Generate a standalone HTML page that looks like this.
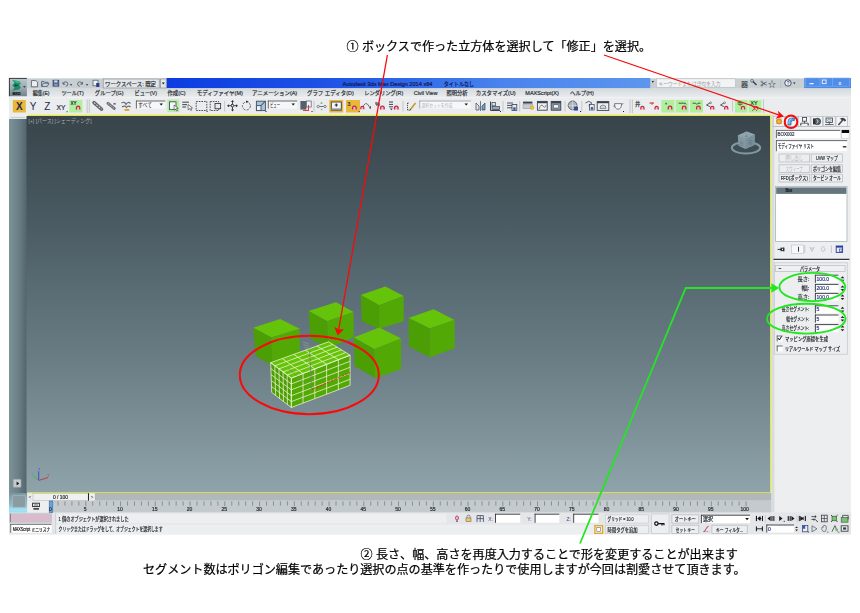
<!DOCTYPE html>
<html lang="ja"><head><meta charset="utf-8"><title>3ds Max tutorial</title>
<style>
html,body{margin:0;padding:0;background:#fff;}
body{width:860px;height:613px;position:relative;overflow:hidden;font-family:"Liberation Sans","Noto Sans CJK JP",sans-serif;color:#000;}
.cap{position:absolute;white-space:nowrap;font-size:12.08px;line-height:14px;color:#000;font-family:"Liberation Sans","Noto Sans CJK JP",sans-serif;z-index:2;-webkit-text-stroke:0.22px #000;}
#ui{position:absolute;left:0;top:0;filter:blur(0.3px);}
#ov{position:absolute;left:0;top:0;z-index:1;}
#ui text{font-family:"Liberation Sans","Noto Sans CJK JP",sans-serif;}
</style></head><body>
<div class="cap" id="cap1" style="left:346.5px;top:39.6px;">① ボックスで作った立方体を選択して「修正」を選択。</div>
<svg id="ui" width="860" height="613" viewBox="0 0 860 613">
<defs>
<linearGradient id="gvp" x1="0" y1="0" x2="0" y2="1"><stop offset="0" stop-color="#38444a"/><stop offset="0.3" stop-color="#4b5c64"/><stop offset="0.65" stop-color="#6a7d85"/><stop offset="1" stop-color="#8fa3aa"/></linearGradient>
<linearGradient id="gls" x1="0" y1="0" x2="1" y2="0"><stop offset="0" stop-color="#7e9399"/><stop offset="0.5" stop-color="#6c8087"/><stop offset="1" stop-color="#53646b"/></linearGradient>
<linearGradient id="gtitle" x1="0" y1="0" x2="1" y2="0"><stop offset="0" stop-color="#0c3ce0"/><stop offset="0.35" stop-color="#1f54e6"/><stop offset="0.7" stop-color="#4a84ec"/><stop offset="1" stop-color="#5c96ee"/></linearGradient>
<linearGradient id="gmenu" x1="0" y1="0" x2="0" y2="1"><stop offset="0" stop-color="#d3d8db"/><stop offset="0.5" stop-color="#dfe3e5"/><stop offset="1" stop-color="#e9ebed"/></linearGradient>
<linearGradient id="gapp" x1="0" y1="0" x2="0" y2="1"><stop offset="0" stop-color="#bcc8cc"/><stop offset="0.55" stop-color="#9aa8ae"/><stop offset="1" stop-color="#74848a"/></linearGradient>
<linearGradient id="gtog" x1="0" y1="0" x2="0" y2="1"><stop offset="0" stop-color="#7c969e"/><stop offset="0.6" stop-color="#8fbcc8"/><stop offset="0.85" stop-color="#a2e4f4"/><stop offset="1" stop-color="#9adcec"/></linearGradient>
</defs>
<rect x="9.00" y="78.00" width="842.00" height="456.30" fill="#e9ebec" />
<rect x="9.00" y="78.00" width="842.00" height="10.50" fill="#c8cfd2" />
<line x1="9.00" y1="78.50" x2="851.00" y2="78.50" stroke="#dde2e4" stroke-width="0.8" />
<rect x="166.50" y="78.00" width="483.70" height="10.30" fill="url(#gtitle)" />
<rect x="804.20" y="78.00" width="46.80" height="10.30" fill="#4b8ae6" />
<rect x="9.00" y="88.30" width="842.00" height="9.00" fill="url(#gmenu)" />
<rect x="9.00" y="97.20" width="842.00" height="17.60" fill="#eaecee" />
<line x1="9.00" y1="97.50" x2="851.00" y2="97.50" stroke="#f6f7f8" stroke-width="0.6" />
<rect x="9.00" y="118.80" width="18.00" height="374.20" fill="url(#gls)" />
<rect x="9.00" y="114.60" width="18.00" height="4.20" fill="#eceeef" />
<line x1="10.50" y1="117.40" x2="25.00" y2="117.40" stroke="#b8bcc0" stroke-width="0.7" />
<rect x="28.00" y="114.80" width="743.20" height="378.20" fill="#e8ec2c" />
<rect x="26.50" y="116.00" width="743.50" height="376.20" fill="url(#gvp)" />
<rect x="771.20" y="114.80" width="79.80" height="397.50" fill="#eceeef" />
<rect x="771.20" y="114.80" width="3.20" height="397.50" fill="#d9dcde" />
<rect x="27.00" y="493.00" width="744.20" height="7.70" fill="#b0b8bc" />
<rect x="27.00" y="500.70" width="744.20" height="12.00" fill="#c4cacd" />
<rect x="9.00" y="512.60" width="842.00" height="21.70" fill="#e4e6e8" />
<rect x="9.00" y="78.00" width="17.90" height="18.20" fill="url(#gapp)" />
<line x1="9.00" y1="78.40" x2="26.90" y2="78.40" stroke="#2a2e30" stroke-width="0.9" />
<line x1="9.40" y1="78.00" x2="9.40" y2="96.20" stroke="#2a2e30" stroke-width="0.9" />
<path d="M12.2,80 l7.2,1.2 1.4,2.2 -1.6,1.8 1.6,2 -1.6,2.4 -7,1.2 2.4,-3 -2.4,-2.4 2.4,-2.6 z" fill="#1c8a68" />
<path d="M12.2,80 l7.2,1.2 1.4,2.2 -4,-0.4 z" fill="#3ab890" />
<path d="M14.6,84.4 l4.4,0.8 -4.2,1.2 z" fill="#0f3a30" />
<text x="12.60" y="95.00" font-size="3.8" fill="#0c1014" text-anchor="start" textLength="8.00" lengthAdjust="spacingAndGlyphs" stroke="#0c1014" stroke-width="0.2" font-weight="bold">MXD</text>
<polygon points="23.00,86.20 25.80,86.20 24.40,87.80" fill="#1a2a5a" />
<path d="M31.4,80.6 h4.4 l1.8,1.6 v4.6 h-6.2 z" fill="#eceef0" stroke="#4a5262" stroke-width="0.8" />
<path d="M41.6,86.4 v-5 h2.4 l0.8,0.9 h3 v1 M41.6,86.4 l1.6,-3.2 h5.8 l-1.6,3.2 z" fill="#c4d4e4" stroke="#4a5566" stroke-width="0.8" />
<rect x="53.00" y="80.20" width="5.80" height="6.00" fill="#5a6c9c" stroke="#34406a" stroke-width="0.7" />
<rect x="54.20" y="80.40" width="3.20" height="2.00" fill="#d4dae8" />
<rect x="54.40" y="84.00" width="3.00" height="2.00" fill="#8a98b8" />
<path d="M63.5,84 a2.2,2.2 0 1 1 2.2,2.2 M63,82 v2.2 h2.2" fill="none" stroke="#5a6270" stroke-width="0.9" />
<text x="69.50" y="85.50" font-size="3.5" fill="#333" text-anchor="start" >▾</text>
<path d="M82,84 a2.2,2.2 0 1 0 -2.2,2.2 M82.5,82 v2.2 h-2.2" fill="none" stroke="#5a6270" stroke-width="0.9" />
<text x="85.50" y="85.50" font-size="3.5" fill="#333" text-anchor="start" >▾</text>
<rect x="93.00" y="80.20" width="5.00" height="5.60" fill="#eef0f2" stroke="#4a5566" stroke-width="0.7" />
<rect x="96.20" y="83.00" width="3.20" height="4.00" fill="#2c3f8a" />
<rect x="103.20" y="79.00" width="56.00" height="9.00" fill="#e3e6e9" stroke="#8a9096" stroke-width="0.7" />
<text x="105.00" y="86.00" font-size="5.8" fill="#2a2e36" text-anchor="start" textLength="51.00" lengthAdjust="spacingAndGlyphs" stroke="#2a2e36" stroke-width="0.2" >ワークスペース: 既定</text>
<rect x="160.40" y="79.00" width="5.80" height="9.00" fill="#e3e6e9" stroke="#8a9096" stroke-width="0.7" />
<polygon points="161.80,82.60 164.80,82.60 163.30,84.60" fill="#222" />
<text x="342.50" y="86.00" font-size="5.6" fill="#0e1a52" text-anchor="start" textLength="90.00" lengthAdjust="spacingAndGlyphs" stroke="#0e1a52" stroke-width="0.2" >Autodesk 3ds Max Design 2014 x64</text>
<text x="443.70" y="86.00" font-size="5.6" fill="#0e1a52" text-anchor="start" textLength="30.50" lengthAdjust="spacingAndGlyphs" stroke="#0e1a52" stroke-width="0.2" >タイトルなし</text>
<polygon points="651.60,81.00 654.00,81.00 652.80,82.80" fill="#222" />
<rect x="656.50" y="78.80" width="79.00" height="8.60" fill="#f2f3f4" stroke="#b5babe" stroke-width="0.6" />
<text x="658.50" y="85.60" font-size="5.2" fill="#9a9fa6" text-anchor="start" textLength="62.00" lengthAdjust="spacingAndGlyphs" >キーワードまたは語句を入力</text>
<text x="741.00" y="86.50" font-size="7" fill="#3a3f46" text-anchor="start" textLength="7.00" lengthAdjust="spacingAndGlyphs" stroke="#3a3f46" stroke-width="0.2" >器</text>
<path d="M752,80.5 l4.5,4.5" fill="none" stroke="#444a52" stroke-width="1.6" />
<circle cx="752.00" cy="80.80" r="1.30" fill="#e8e8e8" stroke="#444a52" stroke-width="0.7" />
<text x="760.50" y="86.40" font-size="6.5" fill="#444a52" text-anchor="start" stroke="#444a52" stroke-width="0.2" >✂</text>
<text x="768.00" y="86.80" font-size="8" fill="#2c3138" text-anchor="start" >☆</text>
<line x1="780.50" y1="79.50" x2="780.50" y2="87.50" stroke="#b5babe" stroke-width="0.7" />
<circle cx="788.00" cy="83.00" r="3.20" fill="#f4f6f8" stroke="#3a4048" stroke-width="0.9" />
<text x="788.00" y="85.00" font-size="5" fill="#2a54c8" text-anchor="middle" font-weight="bold">?</text>
<polygon points="793.00,82.40 795.60,82.40 794.30,84.20" fill="#333" />
<rect x="805.50" y="78.00" width="44.00" height="8.20" fill="#4f8de8" stroke="#7fb0f2" stroke-width="0.6" />
<line x1="820.00" y1="78.00" x2="820.00" y2="86.00" stroke="#7fb0f2" stroke-width="0.6" />
<line x1="832.50" y1="78.00" x2="832.50" y2="86.00" stroke="#7fb0f2" stroke-width="0.6" />
<rect x="809.50" y="83.00" width="4.20" height="1.30" fill="#e8eefc" />
<rect x="822.30" y="80.00" width="3.80" height="3.60" fill="none" stroke="#dfe8fb" stroke-width="1" />
<text x="839.80" y="84.60" font-size="5.6" fill="#e8eefc" text-anchor="middle" font-weight="bold">x</text>
<text x="32.80" y="95.40" font-size="5.7" fill="#2c3036" text-anchor="start" textLength="16.70" lengthAdjust="spacingAndGlyphs" stroke="#2c3036" stroke-width="0.2" >編集(E)</text>
<text x="61.40" y="95.40" font-size="5.7" fill="#2c3036" text-anchor="start" textLength="22.30" lengthAdjust="spacingAndGlyphs" stroke="#2c3036" stroke-width="0.2" >ツール(T)</text>
<text x="94.80" y="95.40" font-size="5.7" fill="#2c3036" text-anchor="start" textLength="28.70" lengthAdjust="spacingAndGlyphs" stroke="#2c3036" stroke-width="0.2" >グループ(G)</text>
<text x="134.60" y="95.40" font-size="5.7" fill="#2c3036" text-anchor="start" textLength="22.40" lengthAdjust="spacingAndGlyphs" stroke="#2c3036" stroke-width="0.2" >ビュー(V)</text>
<text x="167.40" y="95.40" font-size="5.7" fill="#2c3036" text-anchor="start" textLength="18.20" lengthAdjust="spacingAndGlyphs" stroke="#2c3036" stroke-width="0.2" >作成(C)</text>
<text x="196.70" y="95.40" font-size="5.7" fill="#2c3036" text-anchor="start" textLength="46.10" lengthAdjust="spacingAndGlyphs" stroke="#2c3036" stroke-width="0.2" >モディファイヤ(M)</text>
<text x="251.90" y="95.40" font-size="5.7" fill="#2c3036" text-anchor="start" textLength="45.30" lengthAdjust="spacingAndGlyphs" stroke="#2c3036" stroke-width="0.2" >アニメーション(A)</text>
<text x="307.00" y="95.40" font-size="5.7" fill="#2c3036" text-anchor="start" textLength="46.70" lengthAdjust="spacingAndGlyphs" stroke="#2c3036" stroke-width="0.2" >グラフ エディタ(D)</text>
<text x="364.20" y="95.40" font-size="5.7" fill="#2c3036" text-anchor="start" textLength="39.00" lengthAdjust="spacingAndGlyphs" stroke="#2c3036" stroke-width="0.2" >レンダリング(R)</text>
<text x="413.70" y="95.40" font-size="5.7" fill="#2c3036" text-anchor="start" textLength="23.70" lengthAdjust="spacingAndGlyphs" stroke="#2c3036" stroke-width="0.2" >Civil View</text>
<text x="446.50" y="95.40" font-size="5.7" fill="#2c3036" text-anchor="start" textLength="20.90" lengthAdjust="spacingAndGlyphs" stroke="#2c3036" stroke-width="0.2" >照明分析</text>
<text x="475.80" y="95.40" font-size="5.7" fill="#2c3036" text-anchor="start" textLength="39.80" lengthAdjust="spacingAndGlyphs" stroke="#2c3036" stroke-width="0.2" >カスタマイズ(U)</text>
<text x="525.30" y="95.40" font-size="5.7" fill="#2c3036" text-anchor="start" textLength="33.50" lengthAdjust="spacingAndGlyphs" stroke="#2c3036" stroke-width="0.2" >MAXScript(X)</text>
<text x="570.00" y="95.40" font-size="5.7" fill="#2c3036" text-anchor="start" textLength="23.70" lengthAdjust="spacingAndGlyphs" stroke="#2c3036" stroke-width="0.2" >ヘルプ(H)</text>
<rect x="12.80" y="100.00" width="13.00" height="12.50" fill="#e9b83a" />
<text x="19.30" y="110.30" font-size="10" fill="#1d2a4a" text-anchor="middle" font-weight="bold">X</text>
<text x="33.00" y="110.30" font-size="10" fill="#1d2a4a" text-anchor="middle" >Y</text>
<text x="47.40" y="110.30" font-size="10" fill="#1d2a4a" text-anchor="middle" >Z</text>
<text x="61.00" y="109.60" font-size="7.4" fill="#1d2a4a" text-anchor="middle" textLength="9.00" lengthAdjust="spacingAndGlyphs" stroke="#1d2a4a" stroke-width="0.2" >XY</text>
<rect x="66.60" y="111.20" width="1.00" height="1.00" fill="#222" />
<rect x="69.30" y="100.00" width="13.00" height="12.50" fill="#aef09c" />
<text x="70.60" y="105.20" font-size="4.6" fill="#1d2a4a" text-anchor="start" textLength="6.00" lengthAdjust="spacingAndGlyphs" stroke="#1d2a4a" stroke-width="0.2" >XY</text>
<path d="M76.40,109.50 v-1.60 a1.70,1.70 0 0 1 3.40,0 v1.60" fill="#f0b8c4" stroke="#c42840" stroke-width="1.25" />
<line x1="87.20" y1="99.50" x2="87.20" y2="113.00" stroke="#b9bdc1" stroke-width="0.8" />
<line x1="89.30" y1="99.50" x2="89.30" y2="113.00" stroke="#b9bdc1" stroke-width="0.8" />
<path d="M94,102.6 l7.6,6.6" fill="none" stroke="#5e646c" stroke-width="3.4" stroke-linecap="round"/>
<path d="M94,102.6 l7.6,6.6" fill="none" stroke="#d4d8dc" stroke-width="1.1" stroke-dasharray="1.8 1.3"/>
<path d="M108,103.4 l7.4,6" fill="none" stroke="#6a7078" stroke-width="3" stroke-dasharray="3.2 1.6" stroke-linecap="round"/>
<path d="M108,103.4 l7.4,6" fill="none" stroke="#d4d8dc" stroke-width="0.9" stroke-dasharray="1.6 1.4"/>
<text x="113.20" y="104.80" font-size="4.4" fill="#3a3e44" text-anchor="start" stroke="#3a3e44" stroke-width="0.2" >×</text>
<path d="M121.5,103 q3,-2 4.5,1.5 q2,-3.5 4.5,-1 M122,107 q3,-2 4.5,0.5 q2,-2.5 4,-0.5" fill="none" stroke="#6a7078" stroke-width="1.2" />
<rect x="124.50" y="109.00" width="4.80" height="1.80" fill="#e0a020" />
<rect x="136.00" y="100.60" width="29.30" height="8.00" fill="#f6f7f8" />
<line x1="136.00" y1="101.00" x2="165.30" y2="101.00" stroke="#55595c" stroke-width="0.9" />
<line x1="136.40" y1="100.60" x2="136.40" y2="108.60" stroke="#55595c" stroke-width="0.9" />
<text x="138.00" y="106.80" font-size="5.2" fill="#222" text-anchor="start" textLength="14.00" lengthAdjust="spacingAndGlyphs" >すべて</text>
<polygon points="159.50,103.60 163.00,103.60 161.20,105.60" fill="#111" />
<rect x="167.40" y="99.60" width="12.00" height="12.50" fill="#b4f0a4" />
<rect x="169.50" y="101.80" width="6.50" height="7.60" fill="#f4f6f8" stroke="#4a5260" stroke-width="0.9" />
<path d="M174,105 l0.2,5.2 1.3,-1.2 1.2,2 0.9,-0.5 -1.1,-2 1.8,-0.2 z" fill="#fff" stroke="#333" stroke-width="0.6" />
<line x1="182.30" y1="102.20" x2="189.00" y2="102.20" stroke="#4a5260" stroke-width="1.1" />
<line x1="182.30" y1="104.60" x2="187.00" y2="104.60" stroke="#4a5260" stroke-width="1.1" />
<line x1="182.30" y1="107.00" x2="186.00" y2="107.00" stroke="#4a5260" stroke-width="1.1" />
<path d="M188,104.5 l0.2,5.4 1.4,-1.3 1.2,2 0.9,-0.5 -1.1,-2 1.9,-0.2 z" fill="#fff" stroke="#333" stroke-width="0.6" />
<rect x="196.20" y="101.50" width="10.60" height="9.00" fill="none" stroke="#3a4048" stroke-width="0.9" stroke-dasharray="1.6 1"/>
<rect x="206.60" y="111.00" width="1.00" height="1.00" fill="#222" />
<rect x="210.20" y="101.50" width="8.50" height="9.00" fill="none" stroke="#3a4048" stroke-width="0.9" stroke-dasharray="1.6 1"/>
<rect x="215.00" y="103.50" width="5.60" height="5.20" fill="#e6e8ea" stroke="#3a4048" stroke-width="0.9" />
<line x1="224.60" y1="101.00" x2="224.60" y2="111.50" stroke="#b9bdc1" stroke-width="0.8" />
<path d="M232.5,101 v9.5 M228,105.7 h9" fill="none" stroke="#2e343c" stroke-width="0.9" />
<polygon points="232.50,100.00 231.00,102.00 234.00,102.00" fill="#2e343c" />
<polygon points="232.50,111.40 231.00,109.40 234.00,109.40" fill="#2e343c" />
<polygon points="227.00,105.70 229.00,104.20 229.00,107.20" fill="#2e343c" />
<polygon points="238.00,105.70 236.00,104.20 236.00,107.20" fill="#2e343c" />
<rect x="231.40" y="104.60" width="2.20" height="2.20" fill="#eaecee" stroke="#2e343c" stroke-width="0.6" />
<circle cx="246.40" cy="106.00" r="4.00" fill="none" stroke="#5a6068" stroke-width="0.9" stroke-dasharray="2.4 1.2"/>
<polygon points="246.00,100.40 248.80,101.60 246.00,102.80" fill="#333" />
<rect x="256.40" y="101.20" width="9.00" height="9.40" fill="#a8c4e4" stroke="#44505e" stroke-width="0.9" />
<rect x="256.40" y="105.60" width="4.60" height="5.00" fill="#eef0f2" stroke="#44505e" stroke-width="0.9" />
<line x1="261.00" y1="105.60" x2="265.00" y2="101.40" stroke="#222" stroke-width="0.9" />
<rect x="265.50" y="111.00" width="1.00" height="1.00" fill="#222" />
<rect x="267.90" y="100.60" width="29.30" height="8.00" fill="#f6f7f8" />
<line x1="267.90" y1="101.00" x2="297.20" y2="101.00" stroke="#55595c" stroke-width="0.9" />
<line x1="268.30" y1="100.60" x2="268.30" y2="108.60" stroke="#55595c" stroke-width="0.9" />
<text x="270.00" y="106.80" font-size="5.2" fill="#222" text-anchor="start" textLength="10.00" lengthAdjust="spacingAndGlyphs" >ビュー</text>
<polygon points="291.50,103.60 295.00,103.60 293.20,105.60" fill="#111" />
<rect x="300.40" y="101.00" width="6.00" height="8.60" fill="#55606c" />
<rect x="306.40" y="101.00" width="4.80" height="6.00" fill="#f0f2f4" stroke="#55606c" stroke-width="0.7" />
<path d="M303,110.5 h6 M308.5,105 v5" fill="none" stroke="#d22" stroke-width="0.9" />
<rect x="311.50" y="111.00" width="1.00" height="1.00" fill="#222" />
<line x1="314.00" y1="101.00" x2="314.00" y2="111.50" stroke="#b9bdc1" stroke-width="0.8" />
<path d="M317.5,106.5 h8" fill="none" stroke="#5a6270" stroke-width="0.9" />
<circle cx="318.20" cy="106.50" r="1.20" fill="#eaecee" stroke="#5a6270" stroke-width="0.7" />
<circle cx="325.00" cy="106.50" r="1.20" fill="#eaecee" stroke="#5a6270" stroke-width="0.7" />
<polygon points="321.50,102.00 320.20,103.60 322.80,103.60" fill="#4a9a40" />
<rect x="320.90" y="108.80" width="1.30" height="1.30" fill="#8a9098" />
<rect x="329.30" y="100.00" width="13.90" height="12.50" fill="#e9b83a" />
<rect x="331.30" y="102.00" width="10.00" height="8.20" fill="#f4f5f6" stroke="#3a4048" stroke-width="0.9" />
<rect x="331.30" y="108.40" width="10.00" height="1.80" fill="#8a9098" />
<path d="M336.3,103.5 v3.2 M334.8,105 h3" fill="none" stroke="#222" stroke-width="1" />
<rect x="346.00" y="100.00" width="14.00" height="12.50" fill="#e9b83a" />
<text x="347.40" y="105.60" font-size="5" fill="#1d2a4a" text-anchor="start" stroke="#1d2a4a" stroke-width="0.2" >3</text>
<path d="M352.60,109.55 v-1.68 a1.78,1.78 0 0 1 3.57,0 v1.68" fill="#f0b8c4" stroke="#c42840" stroke-width="1.3125" />
<rect x="358.60" y="111.00" width="1.00" height="1.00" fill="#222" />
<path d="M362,109 q3.5,-10 7.5,-2" fill="none" stroke="#4a5260" stroke-width="0.8" />
<polygon points="369.00,108.00 371.00,105.80 370.60,109.00" fill="#333" />
<path d="M360.80,109.30 v-1.44 a1.53,1.53 0 0 1 3.06,0 v1.44" fill="#f0b8c4" stroke="#c42840" stroke-width="1.125" />
<text x="375.30" y="105.60" font-size="5" fill="#1d2a4a" text-anchor="start" stroke="#1d2a4a" stroke-width="0.2" >%</text>
<path d="M380.60,109.55 v-1.68 a1.78,1.78 0 0 1 3.57,0 v1.68" fill="#f0b8c4" stroke="#c42840" stroke-width="1.3125" />
<path d="M389,102 h4 M389,104.4 h4 M389,106.8 h4" fill="none" stroke="#2e343c" stroke-width="0.9" />
<polygon points="390.00,108.40 392.60,108.40 391.30,110.20" fill="#2e343c" />
<path d="M394.50,109.55 v-1.68 a1.78,1.78 0 0 1 3.57,0 v1.68" fill="#f0b8c4" stroke="#c42840" stroke-width="1.3125" />
<line x1="403.00" y1="101.00" x2="403.00" y2="111.50" stroke="#b9bdc1" stroke-width="0.8" />
<path d="M407.5,103 v7 M407.5,103 h1.5 M407.5,110 h1.5" fill="none" stroke="#2e343c" stroke-width="0.8" stroke-dasharray="1.2 0.8"/>
<path d="M410,110 l5.5,-7" fill="none" stroke="#c89a30" stroke-width="1.6" />
<path d="M409.6,110.6 l1,-1.4" fill="none" stroke="#333" stroke-width="1" />
<rect x="419.30" y="100.60" width="51.60" height="8.00" fill="#f6f7f8" />
<line x1="419.30" y1="101.00" x2="470.90" y2="101.00" stroke="#9aa0a6" stroke-width="0.9" />
<line x1="419.70" y1="100.60" x2="419.70" y2="108.60" stroke="#9aa0a6" stroke-width="0.9" />
<text x="421.50" y="106.60" font-size="4.8" fill="#b0b5ba" text-anchor="start" textLength="31.00" lengthAdjust="spacingAndGlyphs" >選択セットを作成</text>
<polygon points="464.50,103.60 468.00,103.60 466.20,105.60" fill="#111" />
<path d="M476,110 v-7 l3,3 v4 z" fill="#dfe6f0" stroke="#3a4250" stroke-width="0.7" />
<path d="M485,110 v-7 l-3,3 v4 z" fill="#6aa0e0" stroke="#3a4250" stroke-width="0.7" />
<line x1="480.50" y1="101.20" x2="480.50" y2="111.00" stroke="#3a4250" stroke-width="0.7" />
<path d="M490.5,101.5 v9 h9.5" fill="none" stroke="#3a4250" stroke-width="1" />
<rect x="492.00" y="102.60" width="3.40" height="3.20" fill="#dfe4ea" stroke="#3a4250" stroke-width="0.7" />
<rect x="492.00" y="106.60" width="7.60" height="3.00" fill="#9aa6b4" stroke="#3a4250" stroke-width="0.7" />
<rect x="500.00" y="111.00" width="1.00" height="1.00" fill="#222" />
<line x1="503.00" y1="101.00" x2="503.00" y2="111.50" stroke="#b9bdc1" stroke-width="0.8" />
<path d="M507,103 h6 M507,105.4 h6 M507,107.8 h5" fill="none" stroke="#3a4250" stroke-width="0.9" />
<rect x="512.00" y="104.50" width="4.80" height="6.00" fill="#e8eaee" stroke="#3a4250" stroke-width="0.8" />
<rect x="513.20" y="107.40" width="2.40" height="2.40" fill="#2a4ab8" />
<line x1="519.70" y1="101.00" x2="519.70" y2="111.50" stroke="#b9bdc1" stroke-width="0.8" />
<rect x="523.00" y="101.60" width="9.40" height="2.00" fill="#3a4250" />
<rect x="523.00" y="104.00" width="9.40" height="4.60" fill="#c6ccd4" stroke="#8a909a" stroke-width="0.5" />
<circle cx="532.00" cy="107.60" r="1.90" fill="#f0c040" stroke="#c89820" stroke-width="0.5" />
<rect x="537.40" y="101.40" width="9.80" height="8.80" fill="#eef0f2" stroke="#3a4250" stroke-width="0.9" />
<rect x="537.40" y="101.40" width="9.80" height="1.80" fill="#3a4250" />
<path d="M539,109 q2,-6 4,-3 t3,-1" fill="none" stroke="#555" stroke-width="0.7" />
<rect x="551.20" y="101.40" width="9.60" height="8.80" fill="#8a949e" stroke="#3a4250" stroke-width="0.9" />
<rect x="551.20" y="101.40" width="9.60" height="1.80" fill="#3a4250" />
<rect x="553.40" y="104.80" width="5.20" height="3.20" fill="#f4f5f6" stroke="#3a4250" stroke-width="0.5" />
<line x1="565.00" y1="101.00" x2="565.00" y2="111.50" stroke="#b9bdc1" stroke-width="0.8" />
<circle cx="572.60" cy="105.40" r="4.40" fill="#aab2ba" stroke="#4a5260" stroke-width="0.8" />
<path d="M568.4,105.4 h8.4 M572.6,101 v8.8" fill="none" stroke="#e8eaec" stroke-width="0.6" />
<rect x="574.40" y="107.00" width="3.40" height="3.20" fill="#2a4ab8" stroke="#1a2a70" stroke-width="0.4" />
<rect x="580.00" y="111.00" width="1.00" height="1.00" fill="#222" />
<line x1="581.80" y1="101.00" x2="581.80" y2="111.50" stroke="#b9bdc1" stroke-width="0.8" />
<path d="M585.5,103 l3,-1.6 3,1.2 -0.4,1.8 h-1.8 v2.2" fill="none" stroke="#4a5260" stroke-width="0.9" />
<rect x="589.60" y="104.60" width="4.60" height="5.40" fill="#e8eaee" stroke="#3a4250" stroke-width="0.7" />
<rect x="590.80" y="107.20" width="2.20" height="2.20" fill="#2a4ab8" />
<rect x="597.20" y="101.60" width="11.60" height="8.80" fill="#eef0f2" stroke="#3a4250" stroke-width="0.9" />
<rect x="597.20" y="101.60" width="11.60" height="1.60" fill="#3a4250" />
<path d="M600,108.4 q0,-3.4 3,-3.4 t3,3.4 z" fill="#d8dce0" stroke="#4a5260" stroke-width="0.6" />
<path d="M614.6,103.6 h7 q0,5.6 -3.5,5.6 t-3.5,-5.6 z M621.4,104.6 l2,-1.2 M614.8,104.8 q-1.8,0.6 -0.4,2.4" fill="#f2f3f4" stroke="#5a6470" stroke-width="0.8" />
<rect x="623.00" y="111.00" width="1.00" height="1.00" fill="#222" />
<line x1="630.00" y1="99.50" x2="630.00" y2="113.00" stroke="#b9bdc1" stroke-width="0.8" />
<line x1="632.40" y1="99.50" x2="632.40" y2="113.00" stroke="#b9bdc1" stroke-width="0.8" />
<text x="635.00" y="106.00" font-size="5.4" fill="#2e343c" text-anchor="start" stroke="#2e343c" stroke-width="0.2" >井</text>
<path d="M640.80,109.45 v-1.52 a1.61,1.61 0 0 1 3.23,0 v1.52" fill="#f0b8c4" stroke="#c42840" stroke-width="1.1875" />
<path d="M649.5,103 h4.5" fill="none" stroke="#c22" stroke-width="1" />
<polygon points="651.00,103.40 653.00,103.40 652.00,105.00" fill="#c22" />
<path d="M655.00,109.45 v-1.52 a1.61,1.61 0 0 1 3.23,0 v1.52" fill="#f0b8c4" stroke="#c42840" stroke-width="1.1875" />
<rect x="661.40" y="100.00" width="13.00" height="12.50" fill="#aef09c" />
<rect x="675.60" y="100.00" width="13.00" height="12.50" fill="#aef09c" />
<rect x="690.00" y="100.00" width="13.00" height="12.50" fill="#aef09c" />
<rect x="665.50" y="102.80" width="1.20" height="1.60" fill="#2e343c" />
<path d="M668.20,109.55 v-1.68 a1.78,1.78 0 0 1 3.57,0 v1.68" fill="#f0b8c4" stroke="#c42840" stroke-width="1.3125" />
<path d="M678.5,103.2 h6.5 l1.4,1.2" fill="none" stroke="#2e343c" stroke-width="0.8" />
<path d="M682.40,109.55 v-1.68 a1.78,1.78 0 0 1 3.57,0 v1.68" fill="#f0b8c4" stroke="#c42840" stroke-width="1.3125" />
<path d="M692.6,103.2 h3 l1.2,1.2 1.2,-1.2 h2.6" fill="none" stroke="#2e343c" stroke-width="0.8" />
<path d="M696.60,109.55 v-1.68 a1.78,1.78 0 0 1 3.57,0 v1.68" fill="#f0b8c4" stroke="#c42840" stroke-width="1.3125" />
<path d="M706.5,105 l4,-2.4 M706.5,105 l3.4,1.6" fill="none" stroke="#2e343c" stroke-width="0.8" />
<circle cx="710.60" cy="102.80" r="0.90" fill="#fff" stroke="#333" stroke-width="0.5" />
<path d="M710.60,109.45 v-1.52 a1.61,1.61 0 0 1 3.23,0 v1.52" fill="#f0b8c4" stroke="#c42840" stroke-width="1.1875" />
<path d="M720.5,105 l4,-2.4 M720.5,105 l3.4,1.6" fill="none" stroke="#2e343c" stroke-width="0.8" />
<circle cx="724.60" cy="102.80" r="0.90" fill="#fff" stroke="#333" stroke-width="0.5" />
<path d="M724.60,109.45 v-1.52 a1.61,1.61 0 0 1 3.23,0 v1.52" fill="#f0b8c4" stroke="#c42840" stroke-width="1.1875" />
<line x1="732.60" y1="101.00" x2="732.60" y2="111.50" stroke="#b9bdc1" stroke-width="0.8" />
<rect x="735.00" y="100.00" width="12.50" height="12.50" fill="#aef09c" />
<rect x="748.80" y="100.00" width="12.50" height="12.50" fill="#aef09c" />
<text x="737.40" y="105.40" font-size="5" fill="#3a5a3a" text-anchor="start" stroke="#3a5a3a" stroke-width="0.2" >中</text>
<path d="M741.40,109.45 v-1.52 a1.61,1.61 0 0 1 3.23,0 v1.52" fill="#f0b8c4" stroke="#c42840" stroke-width="1.1875" />
<text x="750.60" y="105.40" font-size="4.6" fill="#2e4a3a" text-anchor="start" textLength="7.00" lengthAdjust="spacingAndGlyphs" stroke="#2e4a3a" stroke-width="0.2" >XY</text>
<path d="M752,106 l5,5 M757,106 l-5,5" fill="none" stroke="#c8283c" stroke-width="0.8" />
<path d="M754.60,109.50 v-1.44 a1.53,1.53 0 0 1 3.06,0 v1.44" fill="#f0b8c4" stroke="#c42840" stroke-width="1.125" />
<line x1="763.50" y1="99.50" x2="763.50" y2="113.00" stroke="#b9bdc1" stroke-width="0.8" />
<text x="28.60" y="122.60" font-size="5.2" fill="#a9b0b3" text-anchor="start" textLength="63.00" lengthAdjust="spacingAndGlyphs" >[+] [パース] [シェーディング]</text>
<ellipse cx="746.00" cy="147.80" rx="14.20" ry="5.70" fill="#3f4e55" stroke="#8298a0" stroke-width="2" />
<polygon points="737.80,135.40 746.60,131.60 754.80,134.60 754.40,145.00 745.40,149.00 738.40,145.80" fill="#8399a1" />
<polygon points="737.80,135.40 746.60,131.60 754.80,134.60 746.00,138.60" fill="#8fa5ad" />
<polygon points="746.00,138.60 754.80,134.60 754.40,145.00 745.40,149.00" fill="#7b9199" />
<text x="746.40" y="137.00" font-size="3.6" fill="#4a5a9a" text-anchor="middle" >上</text>
<text x="741.80" y="145.00" font-size="4.4" fill="#5a6f8a" text-anchor="middle" >左</text>
<text x="750.40" y="144.20" font-size="4.4" fill="#566b86" text-anchor="middle" >前</text>
<line x1="38.70" y1="480.40" x2="38.70" y2="471.20" stroke="#2a4ae0" stroke-width="0.9" />
<line x1="38.70" y1="480.40" x2="48.00" y2="477.60" stroke="#c8323a" stroke-width="0.9" />
<line x1="38.70" y1="480.40" x2="32.80" y2="475.40" stroke="#3db845" stroke-width="0.9" />
<text x="39.20" y="469.80" font-size="3.6" fill="#2a4ae0" text-anchor="middle" >z</text>
<text x="48.40" y="476.40" font-size="3" fill="#c8323a" text-anchor="middle" >y</text>
<text x="32.40" y="474.60" font-size="3" fill="#3db845" text-anchor="middle" >x</text>
<polygon points="360.60,295.10 385.40,286.60 403.70,296.00 379.20,305.30" fill="#65c40a" />
<polygon points="360.60,295.10 379.20,305.30 379.20,328.80 361.90,321.30" fill="#4b9e04" />
<polygon points="379.20,305.30 403.70,296.00 403.70,321.30 379.20,328.80" fill="#52a906" />
<polygon points="308.50,311.10 336.00,302.30 353.60,312.10 327.20,321.30" fill="#65c40a" />
<polygon points="308.50,311.10 327.20,321.30 328.10,348.30 310.50,338.50" fill="#4b9e04" />
<polygon points="327.20,321.30 353.60,312.10 353.60,337.60 328.10,348.30" fill="#52a906" />
<polygon points="408.50,318.00 433.60,309.20 454.60,319.90 429.70,328.40" fill="#65c40a" />
<polygon points="408.50,318.00 429.70,328.40 429.70,357.20 408.90,346.40" fill="#4b9e04" />
<polygon points="429.70,328.40 454.60,319.90 454.60,348.30 429.70,357.20" fill="#52a906" />
<polygon points="253.30,327.80 280.10,319.00 299.70,328.80 271.30,337.60" fill="#65c40a" />
<polygon points="253.30,327.80 271.30,337.60 272.50,365.50 255.70,356.20" fill="#4b9e04" />
<polygon points="271.30,337.60 299.70,328.80 299.70,356.50 272.50,365.50" fill="#52a906" />
<polygon points="353.70,337.60 379.20,327.40 401.10,338.50 374.30,349.30" fill="#65c40a" />
<polygon points="353.70,337.60 374.30,349.30 375.30,378.30 354.70,366.00" fill="#4b9e04" />
<polygon points="374.30,349.30 401.10,338.50 401.10,368.90 375.30,378.30" fill="#52a906" />
<polygon points="270.70,362.70 328.50,341.80 350.10,355.20 291.30,378.10" fill="#65c40a" />
<polygon points="270.70,362.70 291.30,378.10 291.30,407.50 271.70,392.40" fill="#4b9e04" />
<polygon points="291.30,378.10 350.10,355.20 350.10,385.30 291.30,407.50" fill="#52a906" />
<line x1="270.70" y1="362.70" x2="291.30" y2="378.10" stroke="#f0f4d2" stroke-width="0.75" />
<line x1="270.70" y1="362.70" x2="328.50" y2="341.80" stroke="#f0f4d2" stroke-width="0.75" />
<line x1="270.70" y1="362.70" x2="271.70" y2="392.40" stroke="#f0f4d2" stroke-width="0.75" />
<line x1="270.70" y1="362.70" x2="291.30" y2="378.10" stroke="#f0f4d2" stroke-width="0.75" />
<line x1="291.30" y1="378.10" x2="291.30" y2="407.50" stroke="#f0f4d2" stroke-width="0.75" />
<line x1="291.30" y1="378.10" x2="350.10" y2="355.20" stroke="#f0f4d2" stroke-width="0.75" />
<line x1="282.26" y1="358.52" x2="303.06" y2="373.52" stroke="#f0f4d2" stroke-width="0.75" />
<line x1="274.82" y1="365.78" x2="332.82" y2="344.48" stroke="#f0f4d2" stroke-width="0.75" />
<line x1="274.82" y1="365.78" x2="275.62" y2="395.42" stroke="#f0f4d2" stroke-width="0.75" />
<line x1="270.90" y1="368.64" x2="291.30" y2="383.98" stroke="#f0f4d2" stroke-width="0.75" />
<line x1="303.06" y1="373.52" x2="303.06" y2="403.06" stroke="#f0f4d2" stroke-width="0.75" />
<line x1="291.30" y1="383.98" x2="350.10" y2="361.22" stroke="#f0f4d2" stroke-width="0.75" />
<line x1="293.82" y1="354.34" x2="314.82" y2="368.94" stroke="#f0f4d2" stroke-width="0.75" />
<line x1="278.94" y1="368.86" x2="337.14" y2="347.16" stroke="#f0f4d2" stroke-width="0.75" />
<line x1="278.94" y1="368.86" x2="279.54" y2="398.44" stroke="#f0f4d2" stroke-width="0.75" />
<line x1="271.10" y1="374.58" x2="291.30" y2="389.86" stroke="#f0f4d2" stroke-width="0.75" />
<line x1="314.82" y1="368.94" x2="314.82" y2="398.62" stroke="#f0f4d2" stroke-width="0.75" />
<line x1="291.30" y1="389.86" x2="350.10" y2="367.24" stroke="#f0f4d2" stroke-width="0.75" />
<line x1="305.38" y1="350.16" x2="326.58" y2="364.36" stroke="#f0f4d2" stroke-width="0.75" />
<line x1="283.06" y1="371.94" x2="341.46" y2="349.84" stroke="#f0f4d2" stroke-width="0.75" />
<line x1="283.06" y1="371.94" x2="283.46" y2="401.46" stroke="#f0f4d2" stroke-width="0.75" />
<line x1="271.30" y1="380.52" x2="291.30" y2="395.74" stroke="#f0f4d2" stroke-width="0.75" />
<line x1="326.58" y1="364.36" x2="326.58" y2="394.18" stroke="#f0f4d2" stroke-width="0.75" />
<line x1="291.30" y1="395.74" x2="350.10" y2="373.26" stroke="#f0f4d2" stroke-width="0.75" />
<line x1="316.94" y1="345.98" x2="338.34" y2="359.78" stroke="#f0f4d2" stroke-width="0.75" />
<line x1="287.18" y1="375.02" x2="345.78" y2="352.52" stroke="#f0f4d2" stroke-width="0.75" />
<line x1="287.18" y1="375.02" x2="287.38" y2="404.48" stroke="#f0f4d2" stroke-width="0.75" />
<line x1="271.50" y1="386.46" x2="291.30" y2="401.62" stroke="#f0f4d2" stroke-width="0.75" />
<line x1="338.34" y1="359.78" x2="338.34" y2="389.74" stroke="#f0f4d2" stroke-width="0.75" />
<line x1="291.30" y1="401.62" x2="350.10" y2="379.28" stroke="#f0f4d2" stroke-width="0.75" />
<line x1="328.50" y1="341.80" x2="350.10" y2="355.20" stroke="#f0f4d2" stroke-width="0.75" />
<line x1="291.30" y1="378.10" x2="350.10" y2="355.20" stroke="#f0f4d2" stroke-width="0.75" />
<line x1="291.30" y1="378.10" x2="291.30" y2="407.50" stroke="#f0f4d2" stroke-width="0.75" />
<line x1="271.70" y1="392.40" x2="291.30" y2="407.50" stroke="#f0f4d2" stroke-width="0.75" />
<line x1="350.10" y1="355.20" x2="350.10" y2="385.30" stroke="#f0f4d2" stroke-width="0.75" />
<line x1="291.30" y1="407.50" x2="350.10" y2="385.30" stroke="#f0f4d2" stroke-width="0.75" />
<path d="M303,342 l6,2 M303.5,344.5 l6,2 M304,347 l5.6,1.8" fill="none" stroke="#9aa8ae" stroke-width="0.7" opacity="0.7"/>
<line x1="309.60" y1="350.70" x2="311.60" y2="388.50" stroke="#6f7e74" stroke-width="0.7" />
<line x1="312.20" y1="389.20" x2="349.40" y2="372.90" stroke="#d8201c" stroke-width="0.8" stroke-dasharray="3 1"/>
<line x1="311.60" y1="388.50" x2="288.00" y2="368.30" stroke="#6f8a6a" stroke-width="0.5" />
<text x="349.60" y="374.40" font-size="3.4" fill="#d8201c" text-anchor="middle" >x</text>
<rect x="773.20" y="116.30" width="11.40" height="10.00" fill="#f2f3f4" stroke="#b4b8bc" stroke-width="0.7" />
<rect x="785.40" y="116.30" width="12.00" height="10.00" fill="#f2f3f4" stroke="#b4b8bc" stroke-width="0.7" />
<rect x="798.20" y="116.30" width="12.00" height="10.00" fill="#f2f3f4" stroke="#b4b8bc" stroke-width="0.7" />
<rect x="811.00" y="116.30" width="11.40" height="10.00" fill="#f2f3f4" stroke="#b4b8bc" stroke-width="0.7" />
<rect x="823.20" y="116.30" width="12.00" height="10.00" fill="#f2f3f4" stroke="#b4b8bc" stroke-width="0.7" />
<rect x="836.00" y="116.30" width="11.40" height="10.00" fill="#f2f3f4" stroke="#b4b8bc" stroke-width="0.7" />
<line x1="772.80" y1="126.50" x2="850.00" y2="126.50" stroke="#b4b8bc" stroke-width="0.7" />
<circle cx="779.00" cy="121.40" r="2.60" fill="#f0b030" stroke="#c8781c" stroke-width="0.8" />
<circle cx="779.00" cy="121.40" r="1.00" fill="#fff3c0" />
<path d="M776,118.4 l6,6 M782,118.4 l-6,6" fill="none" stroke="#d88a2a" stroke-width="0.7" />
<path d="M788,125 v-3.4 q0,-3.6 4,-3.6 h2.4 v2.6 h-1.6 q-1.8,0 -1.8,2 v2.4 z" fill="#5aa0e0" stroke="#2a5aa0" stroke-width="0.7" />
<path d="M789,124 v-2.6 q0,-2.4 2.6,-2.6" fill="none" stroke="#d0e6fa" stroke-width="0.8" />
<rect x="802.40" y="117.60" width="4.20" height="3.60" fill="#f4f5f6" stroke="#3a4048" stroke-width="0.8" />
<path d="M804.5,121.2 v2 M800.8,123.2 h7.4 M800.8,123.2 v1.2 M808.2,123.2 v1.2" fill="none" stroke="#3a4048" stroke-width="0.8" />
<circle cx="800.80" cy="124.80" r="0.80" fill="#3a4048" />
<circle cx="808.20" cy="124.80" r="0.80" fill="#3a4048" />
<circle cx="817.40" cy="121.40" r="3.20" fill="#5a6470" stroke="#2e343c" stroke-width="0.8" />
<rect x="813.00" y="118.40" width="2.40" height="6.00" fill="#2e343c" />
<path d="M816.6,119.4 a2.2,2.2 0 0 1 0,4" fill="none" stroke="#e8eaec" stroke-width="0.8" />
<rect x="826.00" y="118.00" width="6.60" height="4.60" fill="#e8eaee" stroke="#3a4048" stroke-width="0.8" />
<path d="M825,124.6 h8.6 M829.3,122.6 v2" fill="none" stroke="#3a4048" stroke-width="0.8" />
<ellipse cx="829.30" cy="120.30" rx="1.80" ry="1.20" fill="none" stroke="#6a7480" stroke-width="0.6" />
<path d="M838.4,125 l4.4,-5" fill="none" stroke="#5a4a40" stroke-width="1.6" />
<path d="M840.4,118.6 q3,-1.6 5.6,1.6 l-1.2,1 q-1.4,-1.6 -3,-1.2 z" fill="#3a4048" stroke="#2a2e34" stroke-width="0.5" />
<rect x="776.00" y="130.00" width="64.20" height="8.20" fill="#fff" />
<line x1="776.00" y1="130.40" x2="840.20" y2="130.40" stroke="#55595c" stroke-width="0.9" />
<line x1="776.40" y1="130.00" x2="776.40" y2="138.20" stroke="#55595c" stroke-width="0.9" />
<text x="777.60" y="136.40" font-size="5" fill="#34384a" text-anchor="start" textLength="17.00" lengthAdjust="spacingAndGlyphs" stroke="#34384a" stroke-width="0.2" >BOX002</text>
<rect x="841.70" y="130.00" width="7.40" height="8.20" fill="#fff" stroke="#c0c4c8" stroke-width="0.5" />
<rect x="841.70" y="130.00" width="7.40" height="3.00" fill="#0a0a0a" />
<rect x="776.00" y="140.20" width="71.20" height="11.00" fill="#fff" />
<line x1="776.00" y1="140.60" x2="847.20" y2="140.60" stroke="#55595c" stroke-width="0.9" />
<line x1="776.40" y1="140.20" x2="776.40" y2="151.20" stroke="#55595c" stroke-width="0.9" />
<text x="777.80" y="148.20" font-size="5.4" fill="#2a2e34" text-anchor="start" textLength="36.00" lengthAdjust="spacingAndGlyphs" stroke="#2a2e34" stroke-width="0.2" >モディファイヤ リスト</text>
<rect x="842.80" y="146.20" width="3.60" height="1.20" fill="#111" />
<rect x="779.00" y="154.00" width="30.70" height="8.00" fill="#eceeef" stroke="#b4b8bb" stroke-width="0.7" />
<rect x="811.20" y="154.00" width="31.40" height="8.00" fill="#eceeef" stroke="#b4b8bb" stroke-width="0.7" />
<rect x="779.00" y="164.80" width="30.70" height="7.60" fill="#eceeef" stroke="#b4b8bb" stroke-width="0.7" />
<rect x="811.20" y="164.80" width="31.40" height="7.60" fill="#eceeef" stroke="#b4b8bb" stroke-width="0.7" />
<rect x="779.00" y="174.20" width="30.70" height="7.80" fill="#eceeef" stroke="#b4b8bb" stroke-width="0.7" />
<rect x="811.20" y="174.20" width="31.40" height="7.80" fill="#eceeef" stroke="#b4b8bb" stroke-width="0.7" />
<text x="794.30" y="160.40" font-size="5.4" fill="#b0b4b8" text-anchor="middle" textLength="18.00" lengthAdjust="spacingAndGlyphs" >押し出し</text>
<text x="826.90" y="160.40" font-size="5.4" fill="#2a2e34" text-anchor="middle" textLength="22.00" lengthAdjust="spacingAndGlyphs" stroke="#2a2e34" stroke-width="0.2" >UVW マップ</text>
<text x="794.30" y="170.80" font-size="5.4" fill="#b0b4b8" text-anchor="middle" textLength="17.00" lengthAdjust="spacingAndGlyphs" >スウィープ</text>
<text x="826.90" y="170.80" font-size="5.4" fill="#2a2e34" text-anchor="middle" textLength="28.00" lengthAdjust="spacingAndGlyphs" stroke="#2a2e34" stroke-width="0.2" >ポリゴンを編集</text>
<text x="794.30" y="180.20" font-size="5.4" fill="#2a2e34" text-anchor="middle" textLength="27.00" lengthAdjust="spacingAndGlyphs" stroke="#2a2e34" stroke-width="0.2" >FFD(ボックス)</text>
<text x="826.90" y="180.20" font-size="5.4" fill="#2a2e34" text-anchor="middle" textLength="28.00" lengthAdjust="spacingAndGlyphs" stroke="#2a2e34" stroke-width="0.2" >タービン オール</text>
<rect x="775.60" y="186.40" width="71.40" height="55.00" fill="#fff" stroke="#a8b4bc" stroke-width="0.8" />
<rect x="776.20" y="187.40" width="70.20" height="6.50" fill="#66767e" />
<text x="785.40" y="192.40" font-size="4.6" fill="#1a1e22" text-anchor="start" textLength="7.00" lengthAdjust="spacingAndGlyphs" stroke="#1a1e22" stroke-width="0.2" font-weight="bold">Box</text>
<path d="M777.6,249.4 h3.4 M781,247.6 v3.6 M781.4,248.2 h2.4 v2.4 h-2.4 z M783.8,247.4 v4" fill="none" stroke="#1a1e22" stroke-width="0.9" />
<rect x="791.40" y="245.00" width="12.00" height="8.60" fill="#f6f7f8" stroke="#c4c8cc" stroke-width="0.7" />
<rect x="798.00" y="246.80" width="0.90" height="4.80" fill="#222" />
<line x1="804.80" y1="245.40" x2="804.80" y2="253.00" stroke="#b4b8bc" stroke-width="0.7" />
<path d="M809.8,246.8 l2.2,4.6 2.2,-4.6 M810.4,248.2 h3.2" fill="none" stroke="#b0b4b8" stroke-width="0.7" />
<path d="M821.6,247 h3 M821.4,248.2 q0,3.2 1.8,3.2 t1.8,-3.2" fill="none" stroke="#b0b4b8" stroke-width="0.7" />
<line x1="831.40" y1="245.40" x2="831.40" y2="253.00" stroke="#b4b8bc" stroke-width="0.7" />
<rect x="836.20" y="246.00" width="6.40" height="6.40" fill="#e8ecf8" stroke="#2a3a9a" stroke-width="0.9" />
<rect x="836.20" y="246.00" width="6.40" height="1.60" fill="#2a3a9a" />
<rect x="839.60" y="249.00" width="2.40" height="2.60" fill="none" stroke="#2a3a9a" stroke-width="0.6" />
<line x1="773.50" y1="259.40" x2="849.40" y2="259.40" stroke="#2e3236" stroke-width="1.1" />
<line x1="773.50" y1="260.60" x2="849.40" y2="260.60" stroke="#fafafa" stroke-width="0.8" />
<rect x="774.30" y="262.80" width="73.00" height="91.40" fill="none" stroke="#c2c6ca" stroke-width="0.7" />
<rect x="775.50" y="265.40" width="69.60" height="6.20" fill="#eef0f1" stroke="#b8bcc0" stroke-width="0.7" />
<rect x="778.60" y="268.20" width="2.60" height="0.80" fill="#222" />
<text x="810.00" y="270.60" font-size="5.2" fill="#2a2e34" text-anchor="middle" textLength="20.00" lengthAdjust="spacingAndGlyphs" stroke="#2a2e34" stroke-width="0.2" >パラメータ</text>
<text x="797.40" y="280.80" font-size="5.4" fill="#2a2e34" text-anchor="start" textLength="12.00" lengthAdjust="spacingAndGlyphs" stroke="#2a2e34" stroke-width="0.2" >長さ:</text>
<rect x="815.00" y="274.80" width="23.40" height="8.00" fill="#fff" />
<line x1="815.00" y1="275.20" x2="838.40" y2="275.20" stroke="#2e3236" stroke-width="0.9" />
<line x1="815.40" y1="274.80" x2="815.40" y2="282.80" stroke="#2e3236" stroke-width="0.9" />
<text x="816.60" y="280.70" font-size="5" fill="#2c3a8a" text-anchor="start" stroke="#2c3a8a" stroke-width="0.2" >100.0</text>
<polygon points="842.50,276.20 840.60,278.20 844.40,278.20" fill="#222" />
<polygon points="842.50,281.80 840.60,279.80 844.40,279.80" fill="#222" />
<text x="801.40" y="290.00" font-size="5.4" fill="#2a2e34" text-anchor="start" textLength="8.00" lengthAdjust="spacingAndGlyphs" stroke="#2a2e34" stroke-width="0.2" >幅:</text>
<rect x="815.00" y="284.00" width="23.40" height="8.00" fill="#fff" />
<line x1="815.00" y1="284.40" x2="838.40" y2="284.40" stroke="#2e3236" stroke-width="0.9" />
<line x1="815.40" y1="284.00" x2="815.40" y2="292.00" stroke="#2e3236" stroke-width="0.9" />
<text x="816.60" y="289.90" font-size="5" fill="#2c3a8a" text-anchor="start" stroke="#2c3a8a" stroke-width="0.2" >200.0</text>
<polygon points="842.50,285.40 840.60,287.40 844.40,287.40" fill="#222" />
<polygon points="842.50,291.00 840.60,289.00 844.40,289.00" fill="#222" />
<text x="797.40" y="299.00" font-size="5.4" fill="#2a2e34" text-anchor="start" textLength="12.00" lengthAdjust="spacingAndGlyphs" stroke="#2a2e34" stroke-width="0.2" >高さ:</text>
<rect x="815.00" y="293.00" width="23.40" height="8.00" fill="#fff" />
<line x1="815.00" y1="293.40" x2="838.40" y2="293.40" stroke="#2e3236" stroke-width="0.9" />
<line x1="815.40" y1="293.00" x2="815.40" y2="301.00" stroke="#2e3236" stroke-width="0.9" />
<text x="816.60" y="298.90" font-size="5" fill="#2c3a8a" text-anchor="start" stroke="#2c3a8a" stroke-width="0.2" >100.0</text>
<polygon points="842.50,294.40 840.60,296.40 844.40,296.40" fill="#222" />
<polygon points="842.50,300.00 840.60,298.00 844.40,298.00" fill="#222" />
<text x="781.80" y="311.40" font-size="5.4" fill="#2a2e34" text-anchor="start" textLength="27.60" lengthAdjust="spacingAndGlyphs" stroke="#2a2e34" stroke-width="0.2" >長さセグメント:</text>
<rect x="815.00" y="305.40" width="23.40" height="8.00" fill="#fff" />
<line x1="815.00" y1="305.80" x2="838.40" y2="305.80" stroke="#2e3236" stroke-width="0.9" />
<line x1="815.40" y1="305.40" x2="815.40" y2="313.40" stroke="#2e3236" stroke-width="0.9" />
<text x="816.60" y="311.30" font-size="5" fill="#2c3a8a" text-anchor="start" stroke="#2c3a8a" stroke-width="0.2" >5</text>
<polygon points="842.50,306.80 840.60,308.80 844.40,308.80" fill="#222" />
<polygon points="842.50,312.40 840.60,310.40 844.40,310.40" fill="#222" />
<text x="786.20" y="320.60" font-size="5.4" fill="#2a2e34" text-anchor="start" textLength="23.20" lengthAdjust="spacingAndGlyphs" stroke="#2a2e34" stroke-width="0.2" >幅セグメント:</text>
<rect x="815.00" y="314.60" width="23.40" height="8.00" fill="#fff" />
<line x1="815.00" y1="315.00" x2="838.40" y2="315.00" stroke="#2e3236" stroke-width="0.9" />
<line x1="815.40" y1="314.60" x2="815.40" y2="322.60" stroke="#2e3236" stroke-width="0.9" />
<text x="816.60" y="320.50" font-size="5" fill="#2c3a8a" text-anchor="start" stroke="#2c3a8a" stroke-width="0.2" >5</text>
<polygon points="842.50,316.00 840.60,318.00 844.40,318.00" fill="#222" />
<polygon points="842.50,321.60 840.60,319.60 844.40,319.60" fill="#222" />
<text x="781.80" y="330.20" font-size="5.4" fill="#2a2e34" text-anchor="start" textLength="27.60" lengthAdjust="spacingAndGlyphs" stroke="#2a2e34" stroke-width="0.2" >高さセグメント:</text>
<rect x="815.00" y="324.20" width="23.40" height="8.00" fill="#fff" />
<line x1="815.00" y1="324.60" x2="838.40" y2="324.60" stroke="#2e3236" stroke-width="0.9" />
<line x1="815.40" y1="324.20" x2="815.40" y2="332.20" stroke="#2e3236" stroke-width="0.9" />
<text x="816.60" y="330.10" font-size="5" fill="#2c3a8a" text-anchor="start" stroke="#2c3a8a" stroke-width="0.2" >5</text>
<polygon points="842.50,325.60 840.60,327.60 844.40,327.60" fill="#222" />
<polygon points="842.50,331.20 840.60,329.20 844.40,329.20" fill="#222" />
<rect x="776.80" y="335.60" width="5.80" height="5.80" fill="#fff" />
<line x1="776.80" y1="336.00" x2="782.60" y2="336.00" stroke="#55595c" stroke-width="0.9" />
<line x1="777.20" y1="335.60" x2="777.20" y2="341.40" stroke="#55595c" stroke-width="0.9" />
<path d="M777.9,338 l1.5,2 2.2,-3.6" fill="none" stroke="#111" stroke-width="1" />
<text x="785.00" y="340.60" font-size="5.2" fill="#2a2e34" text-anchor="start" textLength="43.00" lengthAdjust="spacingAndGlyphs" stroke="#2a2e34" stroke-width="0.2" >マッピング座標を生成</text>
<rect x="776.80" y="345.60" width="5.80" height="5.80" fill="#fff" />
<line x1="776.80" y1="346.00" x2="782.60" y2="346.00" stroke="#55595c" stroke-width="0.9" />
<line x1="777.20" y1="345.60" x2="777.20" y2="351.40" stroke="#55595c" stroke-width="0.9" />
<text x="785.00" y="350.60" font-size="5.2" fill="#2a2e34" text-anchor="start" textLength="55.00" lengthAdjust="spacingAndGlyphs" stroke="#2a2e34" stroke-width="0.2" >リアルワールド マップ サイズ</text>
<rect x="13.20" y="479.30" width="7.80" height="8.00" fill="#c4cacd" stroke="#98a4a8" stroke-width="0.6" rx="0.8"/>
<polygon points="16.60,481.60 16.60,485.60 19.20,483.60" fill="#111" />
<rect x="9.00" y="493.00" width="18.00" height="19.60" fill="url(#gtog)" />
<rect x="12.70" y="495.70" width="12.70" height="11.50" fill="#8a9ca2" stroke="#a4bcc4" stroke-width="0.7" />
<rect x="27.20" y="493.20" width="5.80" height="7.40" fill="#eef0f1" />
<text x="28.40" y="499.20" font-size="5" fill="#333" text-anchor="start" >&lt;</text>
<rect x="33.00" y="493.20" width="55.20" height="7.40" fill="#eef0f1" stroke="#b6babd" stroke-width="0.6" />
<text x="60.50" y="499.20" font-size="5" fill="#2a2e34" text-anchor="middle" textLength="15.00" lengthAdjust="spacingAndGlyphs" stroke="#2a2e34" stroke-width="0.2" >0 / 100</text>
<rect x="88.00" y="493.20" width="1.00" height="7.40" fill="#222" />
<rect x="89.00" y="493.20" width="5.80" height="7.40" fill="#eef0f1" />
<text x="90.40" y="499.20" font-size="5" fill="#333" text-anchor="start" >&gt;</text>
<rect x="27.20" y="500.80" width="22.00" height="11.80" fill="#eceeef" />
<rect x="32.60" y="503.20" width="6.80" height="3.40" fill="#f4f5f6" stroke="#222" stroke-width="0.9" />
<rect x="33.40" y="508.20" width="5.60" height="1.40" fill="#222" />
<path d="M34,505 h4" fill="none" stroke="#222" stroke-width="0.7" />
<rect x="49.20" y="501.00" width="3.60" height="11.60" fill="#6aa4d8" stroke="#3a6aa8" stroke-width="0.6" />
<line x1="58.02" y1="501.40" x2="58.02" y2="505.60" stroke="#687176" stroke-width="0.65" />
<line x1="64.97" y1="501.40" x2="64.97" y2="505.60" stroke="#687176" stroke-width="0.65" />
<line x1="71.92" y1="501.40" x2="71.92" y2="505.60" stroke="#687176" stroke-width="0.65" />
<line x1="78.87" y1="501.40" x2="78.87" y2="505.60" stroke="#687176" stroke-width="0.65" />
<line x1="85.82" y1="501.40" x2="85.82" y2="506.20" stroke="#687176" stroke-width="0.65" />
<line x1="92.77" y1="501.40" x2="92.77" y2="505.60" stroke="#687176" stroke-width="0.65" />
<line x1="99.72" y1="501.40" x2="99.72" y2="505.60" stroke="#687176" stroke-width="0.65" />
<line x1="106.67" y1="501.40" x2="106.67" y2="505.60" stroke="#687176" stroke-width="0.65" />
<line x1="113.62" y1="501.40" x2="113.62" y2="505.60" stroke="#687176" stroke-width="0.65" />
<line x1="120.57" y1="501.40" x2="120.57" y2="506.20" stroke="#687176" stroke-width="0.65" />
<line x1="127.52" y1="501.40" x2="127.52" y2="505.60" stroke="#687176" stroke-width="0.65" />
<line x1="134.47" y1="501.40" x2="134.47" y2="505.60" stroke="#687176" stroke-width="0.65" />
<line x1="141.42" y1="501.40" x2="141.42" y2="505.60" stroke="#687176" stroke-width="0.65" />
<line x1="148.37" y1="501.40" x2="148.37" y2="505.60" stroke="#687176" stroke-width="0.65" />
<line x1="155.32" y1="501.40" x2="155.32" y2="506.20" stroke="#687176" stroke-width="0.65" />
<line x1="162.27" y1="501.40" x2="162.27" y2="505.60" stroke="#687176" stroke-width="0.65" />
<line x1="169.22" y1="501.40" x2="169.22" y2="505.60" stroke="#687176" stroke-width="0.65" />
<line x1="176.17" y1="501.40" x2="176.17" y2="505.60" stroke="#687176" stroke-width="0.65" />
<line x1="183.12" y1="501.40" x2="183.12" y2="505.60" stroke="#687176" stroke-width="0.65" />
<line x1="190.07" y1="501.40" x2="190.07" y2="506.20" stroke="#687176" stroke-width="0.65" />
<line x1="197.02" y1="501.40" x2="197.02" y2="505.60" stroke="#687176" stroke-width="0.65" />
<line x1="203.97" y1="501.40" x2="203.97" y2="505.60" stroke="#687176" stroke-width="0.65" />
<line x1="210.92" y1="501.40" x2="210.92" y2="505.60" stroke="#687176" stroke-width="0.65" />
<line x1="217.87" y1="501.40" x2="217.87" y2="505.60" stroke="#687176" stroke-width="0.65" />
<line x1="224.82" y1="501.40" x2="224.82" y2="506.20" stroke="#687176" stroke-width="0.65" />
<line x1="231.77" y1="501.40" x2="231.77" y2="505.60" stroke="#687176" stroke-width="0.65" />
<line x1="238.72" y1="501.40" x2="238.72" y2="505.60" stroke="#687176" stroke-width="0.65" />
<line x1="245.67" y1="501.40" x2="245.67" y2="505.60" stroke="#687176" stroke-width="0.65" />
<line x1="252.62" y1="501.40" x2="252.62" y2="505.60" stroke="#687176" stroke-width="0.65" />
<line x1="259.57" y1="501.40" x2="259.57" y2="506.20" stroke="#687176" stroke-width="0.65" />
<line x1="266.52" y1="501.40" x2="266.52" y2="505.60" stroke="#687176" stroke-width="0.65" />
<line x1="273.47" y1="501.40" x2="273.47" y2="505.60" stroke="#687176" stroke-width="0.65" />
<line x1="280.42" y1="501.40" x2="280.42" y2="505.60" stroke="#687176" stroke-width="0.65" />
<line x1="287.37" y1="501.40" x2="287.37" y2="505.60" stroke="#687176" stroke-width="0.65" />
<line x1="294.32" y1="501.40" x2="294.32" y2="506.20" stroke="#687176" stroke-width="0.65" />
<line x1="301.27" y1="501.40" x2="301.27" y2="505.60" stroke="#687176" stroke-width="0.65" />
<line x1="308.22" y1="501.40" x2="308.22" y2="505.60" stroke="#687176" stroke-width="0.65" />
<line x1="315.17" y1="501.40" x2="315.17" y2="505.60" stroke="#687176" stroke-width="0.65" />
<line x1="322.12" y1="501.40" x2="322.12" y2="505.60" stroke="#687176" stroke-width="0.65" />
<line x1="329.07" y1="501.40" x2="329.07" y2="506.20" stroke="#687176" stroke-width="0.65" />
<line x1="336.02" y1="501.40" x2="336.02" y2="505.60" stroke="#687176" stroke-width="0.65" />
<line x1="342.97" y1="501.40" x2="342.97" y2="505.60" stroke="#687176" stroke-width="0.65" />
<line x1="349.92" y1="501.40" x2="349.92" y2="505.60" stroke="#687176" stroke-width="0.65" />
<line x1="356.87" y1="501.40" x2="356.87" y2="505.60" stroke="#687176" stroke-width="0.65" />
<line x1="363.82" y1="501.40" x2="363.82" y2="506.20" stroke="#687176" stroke-width="0.65" />
<line x1="370.77" y1="501.40" x2="370.77" y2="505.60" stroke="#687176" stroke-width="0.65" />
<line x1="377.72" y1="501.40" x2="377.72" y2="505.60" stroke="#687176" stroke-width="0.65" />
<line x1="384.67" y1="501.40" x2="384.67" y2="505.60" stroke="#687176" stroke-width="0.65" />
<line x1="391.62" y1="501.40" x2="391.62" y2="505.60" stroke="#687176" stroke-width="0.65" />
<line x1="398.57" y1="501.40" x2="398.57" y2="506.20" stroke="#687176" stroke-width="0.65" />
<line x1="405.52" y1="501.40" x2="405.52" y2="505.60" stroke="#687176" stroke-width="0.65" />
<line x1="412.47" y1="501.40" x2="412.47" y2="505.60" stroke="#687176" stroke-width="0.65" />
<line x1="419.42" y1="501.40" x2="419.42" y2="505.60" stroke="#687176" stroke-width="0.65" />
<line x1="426.37" y1="501.40" x2="426.37" y2="505.60" stroke="#687176" stroke-width="0.65" />
<line x1="433.32" y1="501.40" x2="433.32" y2="506.20" stroke="#687176" stroke-width="0.65" />
<line x1="440.27" y1="501.40" x2="440.27" y2="505.60" stroke="#687176" stroke-width="0.65" />
<line x1="447.22" y1="501.40" x2="447.22" y2="505.60" stroke="#687176" stroke-width="0.65" />
<line x1="454.17" y1="501.40" x2="454.17" y2="505.60" stroke="#687176" stroke-width="0.65" />
<line x1="461.12" y1="501.40" x2="461.12" y2="505.60" stroke="#687176" stroke-width="0.65" />
<line x1="468.07" y1="501.40" x2="468.07" y2="506.20" stroke="#687176" stroke-width="0.65" />
<line x1="475.02" y1="501.40" x2="475.02" y2="505.60" stroke="#687176" stroke-width="0.65" />
<line x1="481.97" y1="501.40" x2="481.97" y2="505.60" stroke="#687176" stroke-width="0.65" />
<line x1="488.92" y1="501.40" x2="488.92" y2="505.60" stroke="#687176" stroke-width="0.65" />
<line x1="495.87" y1="501.40" x2="495.87" y2="505.60" stroke="#687176" stroke-width="0.65" />
<line x1="502.82" y1="501.40" x2="502.82" y2="506.20" stroke="#687176" stroke-width="0.65" />
<line x1="509.77" y1="501.40" x2="509.77" y2="505.60" stroke="#687176" stroke-width="0.65" />
<line x1="516.72" y1="501.40" x2="516.72" y2="505.60" stroke="#687176" stroke-width="0.65" />
<line x1="523.67" y1="501.40" x2="523.67" y2="505.60" stroke="#687176" stroke-width="0.65" />
<line x1="530.62" y1="501.40" x2="530.62" y2="505.60" stroke="#687176" stroke-width="0.65" />
<line x1="537.57" y1="501.40" x2="537.57" y2="506.20" stroke="#687176" stroke-width="0.65" />
<line x1="544.52" y1="501.40" x2="544.52" y2="505.60" stroke="#687176" stroke-width="0.65" />
<line x1="551.47" y1="501.40" x2="551.47" y2="505.60" stroke="#687176" stroke-width="0.65" />
<line x1="558.42" y1="501.40" x2="558.42" y2="505.60" stroke="#687176" stroke-width="0.65" />
<line x1="565.37" y1="501.40" x2="565.37" y2="505.60" stroke="#687176" stroke-width="0.65" />
<line x1="572.32" y1="501.40" x2="572.32" y2="506.20" stroke="#687176" stroke-width="0.65" />
<line x1="579.27" y1="501.40" x2="579.27" y2="505.60" stroke="#687176" stroke-width="0.65" />
<line x1="586.22" y1="501.40" x2="586.22" y2="505.60" stroke="#687176" stroke-width="0.65" />
<line x1="593.17" y1="501.40" x2="593.17" y2="505.60" stroke="#687176" stroke-width="0.65" />
<line x1="600.12" y1="501.40" x2="600.12" y2="505.60" stroke="#687176" stroke-width="0.65" />
<line x1="607.07" y1="501.40" x2="607.07" y2="506.20" stroke="#687176" stroke-width="0.65" />
<line x1="614.02" y1="501.40" x2="614.02" y2="505.60" stroke="#687176" stroke-width="0.65" />
<line x1="620.97" y1="501.40" x2="620.97" y2="505.60" stroke="#687176" stroke-width="0.65" />
<line x1="627.92" y1="501.40" x2="627.92" y2="505.60" stroke="#687176" stroke-width="0.65" />
<line x1="634.87" y1="501.40" x2="634.87" y2="505.60" stroke="#687176" stroke-width="0.65" />
<line x1="641.82" y1="501.40" x2="641.82" y2="506.20" stroke="#687176" stroke-width="0.65" />
<line x1="648.77" y1="501.40" x2="648.77" y2="505.60" stroke="#687176" stroke-width="0.65" />
<line x1="655.72" y1="501.40" x2="655.72" y2="505.60" stroke="#687176" stroke-width="0.65" />
<line x1="662.67" y1="501.40" x2="662.67" y2="505.60" stroke="#687176" stroke-width="0.65" />
<line x1="669.62" y1="501.40" x2="669.62" y2="505.60" stroke="#687176" stroke-width="0.65" />
<line x1="676.57" y1="501.40" x2="676.57" y2="506.20" stroke="#687176" stroke-width="0.65" />
<line x1="683.52" y1="501.40" x2="683.52" y2="505.60" stroke="#687176" stroke-width="0.65" />
<line x1="690.47" y1="501.40" x2="690.47" y2="505.60" stroke="#687176" stroke-width="0.65" />
<line x1="697.42" y1="501.40" x2="697.42" y2="505.60" stroke="#687176" stroke-width="0.65" />
<line x1="704.37" y1="501.40" x2="704.37" y2="505.60" stroke="#687176" stroke-width="0.65" />
<line x1="711.32" y1="501.40" x2="711.32" y2="506.20" stroke="#687176" stroke-width="0.65" />
<line x1="718.27" y1="501.40" x2="718.27" y2="505.60" stroke="#687176" stroke-width="0.65" />
<line x1="725.22" y1="501.40" x2="725.22" y2="505.60" stroke="#687176" stroke-width="0.65" />
<line x1="732.17" y1="501.40" x2="732.17" y2="505.60" stroke="#687176" stroke-width="0.65" />
<line x1="739.12" y1="501.40" x2="739.12" y2="505.60" stroke="#687176" stroke-width="0.65" />
<line x1="746.07" y1="501.40" x2="746.07" y2="506.20" stroke="#687176" stroke-width="0.65" />
<text x="50.47" y="511.40" font-size="5" fill="#2a2e34" text-anchor="middle" stroke="#2a2e34" stroke-width="0.2" >0</text>
<text x="85.22" y="511.40" font-size="5" fill="#2a2e34" text-anchor="middle" stroke="#2a2e34" stroke-width="0.2" >5</text>
<text x="119.97" y="511.40" font-size="5" fill="#2a2e34" text-anchor="middle" stroke="#2a2e34" stroke-width="0.2" >10</text>
<text x="154.72" y="511.40" font-size="5" fill="#2a2e34" text-anchor="middle" stroke="#2a2e34" stroke-width="0.2" >15</text>
<text x="189.47" y="511.40" font-size="5" fill="#2a2e34" text-anchor="middle" stroke="#2a2e34" stroke-width="0.2" >20</text>
<text x="224.22" y="511.40" font-size="5" fill="#2a2e34" text-anchor="middle" stroke="#2a2e34" stroke-width="0.2" >25</text>
<text x="258.97" y="511.40" font-size="5" fill="#2a2e34" text-anchor="middle" stroke="#2a2e34" stroke-width="0.2" >30</text>
<text x="293.72" y="511.40" font-size="5" fill="#2a2e34" text-anchor="middle" stroke="#2a2e34" stroke-width="0.2" >35</text>
<text x="328.47" y="511.40" font-size="5" fill="#2a2e34" text-anchor="middle" stroke="#2a2e34" stroke-width="0.2" >40</text>
<text x="363.22" y="511.40" font-size="5" fill="#2a2e34" text-anchor="middle" stroke="#2a2e34" stroke-width="0.2" >45</text>
<text x="397.97" y="511.40" font-size="5" fill="#2a2e34" text-anchor="middle" stroke="#2a2e34" stroke-width="0.2" >50</text>
<text x="432.72" y="511.40" font-size="5" fill="#2a2e34" text-anchor="middle" stroke="#2a2e34" stroke-width="0.2" >55</text>
<text x="467.47" y="511.40" font-size="5" fill="#2a2e34" text-anchor="middle" stroke="#2a2e34" stroke-width="0.2" >60</text>
<text x="502.22" y="511.40" font-size="5" fill="#2a2e34" text-anchor="middle" stroke="#2a2e34" stroke-width="0.2" >65</text>
<text x="536.97" y="511.40" font-size="5" fill="#2a2e34" text-anchor="middle" stroke="#2a2e34" stroke-width="0.2" >70</text>
<text x="571.72" y="511.40" font-size="5" fill="#2a2e34" text-anchor="middle" stroke="#2a2e34" stroke-width="0.2" >75</text>
<text x="606.47" y="511.40" font-size="5" fill="#2a2e34" text-anchor="middle" stroke="#2a2e34" stroke-width="0.2" >80</text>
<text x="641.22" y="511.40" font-size="5" fill="#2a2e34" text-anchor="middle" stroke="#2a2e34" stroke-width="0.2" >85</text>
<text x="675.97" y="511.40" font-size="5" fill="#2a2e34" text-anchor="middle" stroke="#2a2e34" stroke-width="0.2" >90</text>
<text x="710.72" y="511.40" font-size="5" fill="#2a2e34" text-anchor="middle" stroke="#2a2e34" stroke-width="0.2" >95</text>
<text x="744.57" y="511.40" font-size="5" fill="#2a2e34" text-anchor="middle" stroke="#2a2e34" stroke-width="0.2" >100</text>
<rect x="9.20" y="513.20" width="42.80" height="9.60" fill="#c4c8cc" />
<rect x="10.30" y="514.00" width="41.20" height="7.80" fill="#d9bccb" />
<line x1="10.50" y1="513.60" x2="10.50" y2="522.00" stroke="#6a6e72" stroke-width="0.7" />
<rect x="10.30" y="523.90" width="41.20" height="8.90" fill="#fff" />
<line x1="10.30" y1="524.30" x2="51.50" y2="524.30" stroke="#5a5e62" stroke-width="0.9" />
<line x1="10.70" y1="523.90" x2="10.70" y2="532.80" stroke="#5a5e62" stroke-width="0.9" />
<text x="12.70" y="530.60" font-size="4.8" fill="#22262a" text-anchor="start" textLength="37.50" lengthAdjust="spacingAndGlyphs" stroke="#22262a" stroke-width="0.2" >MAXScript ミニリスナ</text>
<line x1="55.60" y1="513.00" x2="55.60" y2="534.00" stroke="#c6cacd" stroke-width="0.8" />
<rect x="56.50" y="513.60" width="390.00" height="9.60" fill="#eceeef" />
<rect x="56.50" y="524.40" width="538.00" height="9.60" fill="#eceeef" />
<text x="58.60" y="520.60" font-size="5.4" fill="#2a2e34" text-anchor="start" textLength="70.00" lengthAdjust="spacingAndGlyphs" stroke="#2a2e34" stroke-width="0.2" >1 個のオブジェクトが選択されました</text>
<text x="58.60" y="531.20" font-size="5.4" fill="#2a2e34" text-anchor="start" textLength="104.00" lengthAdjust="spacingAndGlyphs" stroke="#2a2e34" stroke-width="0.2" >クリックまたはドラッグをして、オブジェクトを選択します</text>
<ellipse cx="457.00" cy="518.00" rx="1.50" ry="2.00" fill="#f0c0d8" stroke="#b83878" stroke-width="0.9" />
<rect x="456.20" y="520.40" width="1.60" height="1.60" fill="#6a5a64" />
<rect x="466.00" y="518.00" width="5.00" height="3.60" fill="#e8c880" stroke="#8a6a30" stroke-width="0.6" />
<path d="M467,518 v-1.4 a1.5,1.5 0 0 1 3,0 v1.4" fill="none" stroke="#6a7078" stroke-width="0.8" />
<path d="M477,515.6 h6.4 v6.4 M477,515.6 v6.4 M480.2,515.6 v6.4 M477,518.6 h6.4" fill="none" stroke="#3a4a6a" stroke-width="0.8" />
<text x="488.20" y="521.00" font-size="5" fill="#3a4a8a" text-anchor="start" >X:</text>
<rect x="495.10" y="513.80" width="25.10" height="9.00" fill="#fff" />
<line x1="495.10" y1="514.20" x2="520.20" y2="514.20" stroke="#2e3236" stroke-width="0.9" />
<line x1="495.50" y1="513.80" x2="495.50" y2="522.80" stroke="#2e3236" stroke-width="0.9" />
<text x="527.20" y="521.00" font-size="5" fill="#3a4a8a" text-anchor="start" >Y:</text>
<rect x="534.70" y="513.80" width="24.60" height="9.00" fill="#fff" />
<line x1="534.70" y1="514.20" x2="559.30" y2="514.20" stroke="#2e3236" stroke-width="0.9" />
<line x1="535.10" y1="513.80" x2="535.10" y2="522.80" stroke="#2e3236" stroke-width="0.9" />
<text x="566.40" y="521.00" font-size="5" fill="#3a4a8a" text-anchor="start" >Z:</text>
<rect x="573.30" y="513.80" width="25.10" height="9.00" fill="#fff" />
<line x1="573.30" y1="514.20" x2="598.40" y2="514.20" stroke="#2e3236" stroke-width="0.9" />
<line x1="573.70" y1="513.80" x2="573.70" y2="522.80" stroke="#2e3236" stroke-width="0.9" />
<rect x="605.30" y="514.80" width="43.30" height="8.30" fill="#eceeef" stroke="#c6cacd" stroke-width="0.6" />
<text x="607.60" y="521.20" font-size="5.2" fill="#2a2e34" text-anchor="start" textLength="26.00" lengthAdjust="spacingAndGlyphs" stroke="#2a2e34" stroke-width="0.2" >グリッド = 10.0</text>
<rect x="594.90" y="525.70" width="7.60" height="7.60" fill="#fff" stroke="#e0a830" stroke-width="1.4" />
<rect x="596.80" y="527.60" width="3.80" height="3.80" fill="none" stroke="#6a6a6a" stroke-width="0.6" />
<rect x="605.30" y="525.50" width="43.30" height="8.20" fill="#eceeef" stroke="#c6cacd" stroke-width="0.6" />
<text x="607.60" y="531.80" font-size="5.2" fill="#2a2e34" text-anchor="start" textLength="30.00" lengthAdjust="spacingAndGlyphs" stroke="#2a2e34" stroke-width="0.2" >時間タグを追加</text>
<rect x="651.40" y="514.00" width="17.60" height="19.40" fill="#eceeef" stroke="#c6cacd" stroke-width="0.7" />
<circle cx="656.40" cy="523.60" r="1.70" fill="none" stroke="#111" stroke-width="1.2" />
<path d="M658,523.6 h6.4 M662,523.6 v1.8 M664,523.6 v1.6" fill="none" stroke="#111" stroke-width="1.2" />
<rect x="671.90" y="514.80" width="26.90" height="8.30" fill="#eceeef" stroke="#b4b8bb" stroke-width="0.7" />
<text x="685.30" y="521.20" font-size="5.2" fill="#2a2e34" text-anchor="middle" textLength="21.00" lengthAdjust="spacingAndGlyphs" stroke="#2a2e34" stroke-width="0.2" >オートキー</text>
<rect x="671.90" y="525.20" width="26.90" height="8.30" fill="#eceeef" stroke="#b4b8bb" stroke-width="0.7" />
<text x="685.30" y="531.60" font-size="5.2" fill="#2a2e34" text-anchor="middle" textLength="19.00" lengthAdjust="spacingAndGlyphs" stroke="#2a2e34" stroke-width="0.2" >セット キー</text>
<rect x="701.00" y="514.80" width="49.00" height="8.30" fill="#fff" />
<line x1="701.00" y1="515.20" x2="750.00" y2="515.20" stroke="#2e3236" stroke-width="0.9" />
<line x1="701.40" y1="514.80" x2="701.40" y2="523.10" stroke="#2e3236" stroke-width="0.9" />
<text x="703.00" y="521.20" font-size="5.2" fill="#2a2e34" text-anchor="start" textLength="10.00" lengthAdjust="spacingAndGlyphs" stroke="#2a2e34" stroke-width="0.2" >選択</text>
<polygon points="745.20,518.00 749.00,518.00 747.10,520.20" fill="#111" />
<path d="M703.6,531.6 q1.6,0 2.4,-2.6 t2.6,-2.6" fill="none" stroke="#c8283c" stroke-width="0.9" />
<path d="M703.6,531.6 h5.6" fill="none" stroke="#3a4ab8" stroke-width="0.6" stroke-dasharray="1 0.8"/>
<rect x="711.90" y="525.20" width="35.30" height="8.30" fill="#eceeef" stroke="#b4b8bb" stroke-width="0.7" />
<text x="729.50" y="531.60" font-size="5.2" fill="#2a2e34" text-anchor="middle" textLength="27.00" lengthAdjust="spacingAndGlyphs" stroke="#2a2e34" stroke-width="0.2" >キー フィルタ...</text>
<rect x="755.90" y="515.90" width="1.10" height="5.20" fill="#14181c" />
<polygon points="760.40,516.10 760.40,520.90 757.28,518.50" fill="#14181c" />
<polygon points="759.40,516.70 759.40,520.30 761.74,518.50" fill="#14181c" />
<rect x="762.00" y="515.90" width="1.00" height="5.20" fill="#14181c" />
<line x1="765.40" y1="515.00" x2="765.40" y2="522.40" stroke="#c0c4c8" stroke-width="0.7" />
<polygon points="770.60,516.10 770.60,520.90 767.48,518.50" fill="#14181c" />
<rect x="771.40" y="516.10" width="1.10" height="4.80" fill="#14181c" />
<rect x="773.30" y="516.10" width="1.10" height="4.80" fill="#14181c" />
<polygon points="779.20,515.90 779.20,521.10 782.58,518.50" fill="#14181c" />
<rect x="783.60" y="520.90" width="1.40" height="0.70" fill="#14181c" />
<rect x="787.70" y="516.10" width="1.10" height="4.80" fill="#14181c" />
<rect x="789.60" y="516.10" width="1.10" height="4.80" fill="#14181c" />
<polygon points="791.40,516.10 791.40,520.90 794.52,518.50" fill="#14181c" />
<line x1="797.00" y1="515.00" x2="797.00" y2="522.40" stroke="#c0c4c8" stroke-width="0.7" />
<rect x="798.80" y="515.90" width="1.00" height="5.20" fill="#14181c" />
<polygon points="800.20,516.10 800.20,520.90 803.32,518.50" fill="#14181c" />
<polygon points="803.60,516.70 803.60,520.30 801.26,518.50" fill="#14181c" />
<rect x="804.80" y="515.90" width="1.10" height="5.20" fill="#14181c" />
<path d="M811.4,516.6 h5 M811.4,519.4 h4.2 M815.4,515.4 v2.4 M814,518.4 v2.2" fill="none" stroke="#2e343c" stroke-width="0.8" />
<path d="M815.6,520 l2.2,1.8" fill="none" stroke="#222" stroke-width="0.9" />
<rect x="821.40" y="515.20" width="5.80" height="6.60" fill="none" stroke="#3a4048" stroke-width="0.8" />
<path d="M824.3,515.2 v6.6 M821.4,518.5 h5.8" fill="none" stroke="#3a4048" stroke-width="0.7" />
<rect x="832.00" y="516.20" width="4.60" height="4.60" fill="#7ac07a" stroke="#2e5a2e" stroke-width="0.6" />
<path d="M831,515 l1.4,1.4 M837.6,515 l-1.4,1.4 M831,522 l1.4,-1.4 M837.6,522 l-1.4,-1.4" fill="none" stroke="#222" stroke-width="0.8" />
<rect x="841.20" y="517.60" width="6.80" height="4.60" fill="#7ac07a" stroke="#2e5a2e" stroke-width="0.6" />
<path d="M842.6,517.4 v-2 h5.6 v4" fill="none" stroke="#3a4048" stroke-width="0.8" />
<rect x="755.90" y="526.40" width="1.00" height="4.80" fill="#14181c" />
<rect x="761.90" y="526.40" width="1.00" height="4.80" fill="#14181c" />
<line x1="756.40" y1="528.80" x2="762.40" y2="528.80" stroke="#14181c" stroke-width="0.9" />
<rect x="766.40" y="524.60" width="27.60" height="7.90" fill="#fff" />
<line x1="766.40" y1="525.00" x2="794.00" y2="525.00" stroke="#2e3236" stroke-width="0.9" />
<line x1="766.80" y1="524.60" x2="766.80" y2="532.50" stroke="#2e3236" stroke-width="0.9" />
<text x="768.00" y="530.60" font-size="5" fill="#2c3a8a" text-anchor="start" stroke="#2c3a8a" stroke-width="0.2" >0</text>
<polygon points="796.60,526.40 795.20,528.00 798.00,528.00" fill="#222" />
<polygon points="796.60,531.20 795.20,529.60 798.00,529.60" fill="#222" />
<rect x="802.60" y="525.40" width="5.20" height="6.40" fill="#e8ecf4" stroke="#3a4a7a" stroke-width="0.8" />
<rect x="802.60" y="525.40" width="2.60" height="3.40" fill="#3a5ab0" />
<rect x="808.20" y="531.60" width="0.90" height="0.90" fill="#222" />
<polygon points="812.00,525.80 812.00,531.80 817.00,528.80" fill="none" stroke="#5a646e" stroke-width="0.8" />
<path d="M823,531.4 q-2,-2 -1,-4.4 l1.2,0.4 v-1.6 l1,0 v-0.4 l1,0 v0.6 l1,0.2 q0.6,3 -0.8,5.2 z" fill="#e4e6e8" stroke="#5a646e" stroke-width="0.7" />
<rect x="827.40" y="531.60" width="0.90" height="0.90" fill="#222" />
<path d="M832,531.6 l3,-6 2.4,6" fill="none" stroke="#3a4048" stroke-width="0.8" />
<polygon points="835.40,527.60 838.60,529.40 835.40,530.60" fill="#6ab86a" />
<rect x="838.40" y="531.80" width="0.90" height="0.90" fill="#222" />
<rect x="841.20" y="525.80" width="6.80" height="5.40" fill="#f0f2f4" stroke="#3a4048" stroke-width="0.9" />
<rect x="843.00" y="527.40" width="3.20" height="2.20" fill="#3a4048" />
</svg>
<svg id="ov" width="860" height="613" viewBox="0 0 860 613">
<line x1="387.40" y1="55.00" x2="338.40" y2="331.00" stroke="#f80a0a" stroke-width="1.3" />
<polygon points="337.70,335.60 334.30,327.00 339.00,329.40 344.00,329.30" fill="#f80a0a" />
<ellipse cx="309.30" cy="375.00" rx="69.50" ry="39.20" fill="none" stroke="#f80a0a" stroke-width="2" />
<line x1="604.00" y1="55.00" x2="780.00" y2="115.30" stroke="#f80a0a" stroke-width="1.3" />
<polygon points="784.00,116.60 777.80,110.80 778.80,115.00 775.50,118.80" fill="#f80a0a" />
<circle cx="791.00" cy="121.80" r="6.30" fill="none" stroke="#f80a0a" stroke-width="2" />
<path d="M580,543.5 L685.7,288 L773,288" fill="none" stroke="#22e622" stroke-width="1.8" />
<polygon points="779.20,288.00 771.40,283.20 771.40,292.80" fill="#22e622" />
<ellipse cx="812.30" cy="287.00" rx="32.90" ry="14.10" fill="none" stroke="#22e622" stroke-width="1.9" />
<ellipse cx="806.30" cy="318.70" rx="39.30" ry="14.90" fill="none" stroke="#22e622" stroke-width="1.9" />
</svg>
<div class="cap" id="cap2" style="left:360.5px;top:548.3px;">② 長さ、幅、高さを再度入力することで形を変更することが出来ます</div>
<div class="cap" id="cap3" style="left:143px;top:563.3px;">セグメント数はポリゴン編集であったり選択の点の基準を作ったりで使用しますが今回は割愛させて頂きます。</div>
</body></html>
